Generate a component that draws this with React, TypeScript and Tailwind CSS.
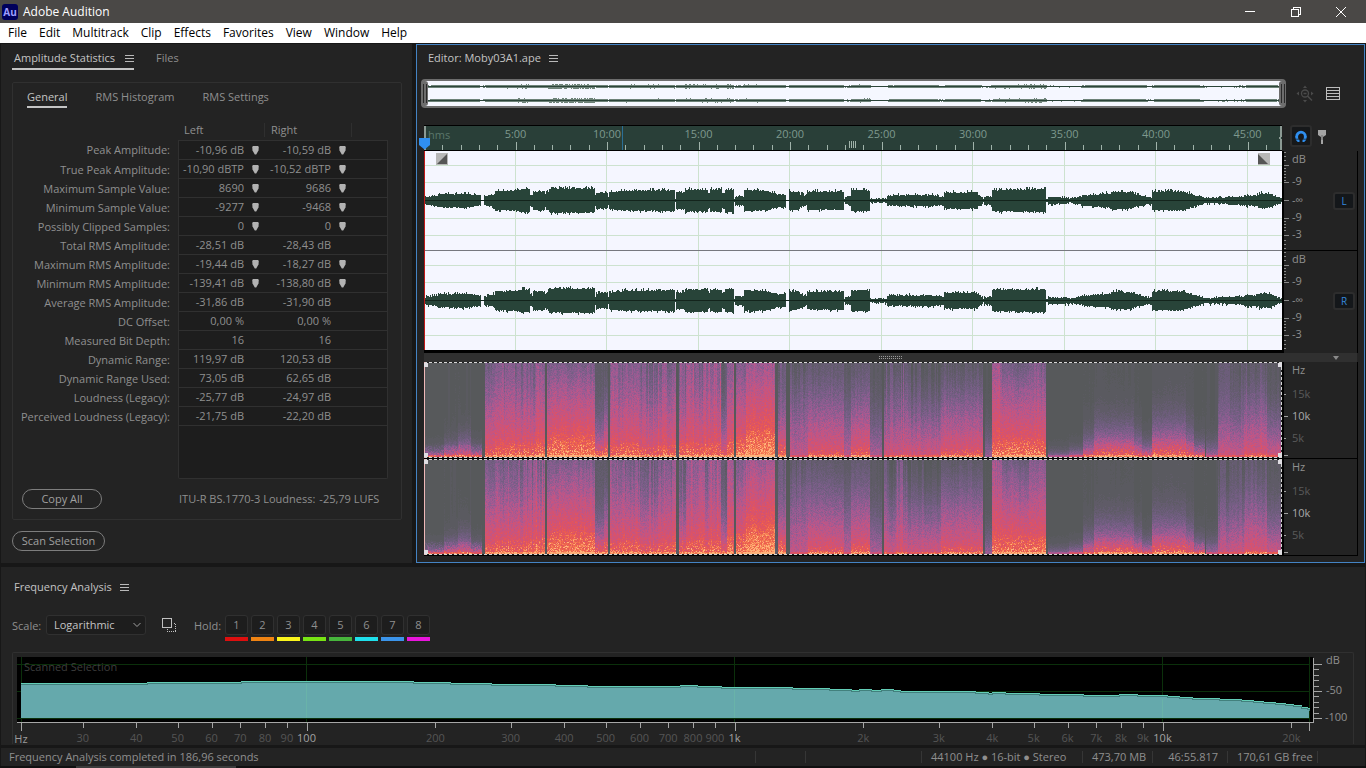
import { useMemo, useState } from "react";
import type { ReactNode } from "react";

type StatRow = { label: string; left: string; right: string; pin?: boolean };

const MENU = ["File", "Edit", "Multitrack", "Clip", "Effects", "Favorites", "View", "Window", "Help"];

const STATS: StatRow[] = [
  { label: "Peak Amplitude:", left: "-10,96 dB", right: "-10,59 dB", pin: true },
  { label: "True Peak Amplitude:", left: "-10,90 dBTP", right: "-10,52 dBTP", pin: true },
  { label: "Maximum Sample Value:", left: "8690", right: "9686", pin: true },
  { label: "Minimum Sample Value:", left: "-9277", right: "-9468", pin: true },
  { label: "Possibly Clipped Samples:", left: "0", right: "0", pin: true },
  { label: "Total RMS Amplitude:", left: "-28,51 dB", right: "-28,43 dB" },
  { label: "Maximum RMS Amplitude:", left: "-19,44 dB", right: "-18,27 dB", pin: true },
  { label: "Minimum RMS Amplitude:", left: "-139,41 dB", right: "-138,80 dB", pin: true },
  { label: "Average RMS Amplitude:", left: "-31,86 dB", right: "-31,90 dB" },
  { label: "DC Offset:", left: "0,00 %", right: "0,00 %" },
  { label: "Measured Bit Depth:", left: "16", right: "16" },
  { label: "Dynamic Range:", left: "119,97 dB", right: "120,53 dB" },
  { label: "Dynamic Range Used:", left: "73,05 dB", right: "62,65 dB" },
  { label: "Loudness (Legacy):", left: "-25,77 dB", right: "-24,97 dB" },
  { label: "Perceived Loudness (Legacy):", left: "-21,75 dB", right: "-22,20 dB" },
];

const HOLDS = [
  { n: 1, bar: "bg-[#dd0f0f]" },
  { n: 2, bar: "bg-[#ef8313]" },
  { n: 3, bar: "bg-[#fbf51c]" },
  { n: 4, bar: "bg-[#78e414]" },
  { n: 5, bar: "bg-[#47b53c]" },
  { n: 6, bar: "bg-[#1fe0ec]" },
  { n: 7, bar: "bg-[#3b94ea]" },
  { n: 8, bar: "bg-[#e815dc]" },
];

const TRACK_W = 858;
const MINUTES = 46.88;

// start, end, amplitude at start, amplitude at end
const ENVELOPE: number[][] = [
  [0, 14, 3, 5], [14, 46, 6, 6.5], [46, 57, 6, 4], [57, 60, 0, 0], [60, 71, 3.5, 6], [71, 79, 9, 9],
  [79, 97, 9, 10], [97, 106, 11, 11], [106, 109, 5, 5], [109, 121, 9, 9], [121, 125, 6, 10],
  [125, 171, 11.5, 11.5], [171, 172, 4, 4], [172, 184, 7, 7.5], [184, 185, 3, 3], [185, 205, 8, 10],
  [205, 251, 9.5, 10], [251, 252, 1, 1], [252, 261, 8, 8], [261, 284, 10.5, 10.5], [284, 286, 7, 7],
  [286, 298, 10.5, 10.5], [298, 301, 7, 8], [301, 310, 11, 11], [310, 311, 1, 1], [311, 320, 4, 4],
  [320, 343, 10, 9], [343, 353, 9, 6], [353, 362, 6, 6], [362, 365, 0, 0], [365, 376, 9, 8],
  [376, 383, 6, 4], [383, 420, 8.5, 8.5], [420, 421, 1, 1], [421, 427, 3, 4], [427, 446, 10, 10],
  [446, 463, 1.5, 1.5], [463, 508, 4.5, 5], [508, 520, 5, 3], [520, 553, 7.5, 7.5], [553, 559, 6, 2],
  [559, 560, 1, 1], [560, 568, 3, 4], [568, 595, 10, 10.5], [595, 622, 10.5, 11], [622, 624, 1, 1],
  [624, 645, 3, 2.5], [645, 658, 1.5, 4], [658, 687, 4.5, 6.5], [687, 710, 8.5, 7.5], [710, 722, 6, 3.5],
  [722, 728, 3, 3], [728, 760, 9, 9], [760, 780, 8, 2.5], [780, 820, 2, 3.5], [820, 835, 4.5, 5],
  [835, 848, 7, 6], [848, 858, 5, 1],
];

// start, end, top level, bottom level, falloff, stripe strength
const BANDS: number[][] = [
  [0, 20, 0, 0.78, 14, 0.02], [20, 34, 0.01, 0.78, 8, 0.05], [34, 47, 0.02, 0.78, 5.5, 0.06],
  [47, 58, 0, 0.78, 10, 0.03], [58, 61, 0, 0.03, 2, 0],
  [61, 71, 0.25, 0.76, 1.2, 0.06], [71, 95, 0.32, 0.8, 1.3, 0.16], [95, 112, 0.3, 0.8, 1.4, 0.16],
  [112, 121, 0.36, 0.82, 1.2, 0.18], [121, 123, 0, 0, 1, 0],
  [123, 128, 0.28, 0.84, 1.1, 0.06], [128, 171, 0.3, 0.87, 1, 0.06], [171, 180, 0.13, 0.8, 3, 0.04],
  [180, 184, 0.12, 0.82, 1.7, 0.05], [184, 186, 0, 0, 1, 0], [186, 196, 0.34, 0.78, 1.5, 0.14],
  [196, 215, 0.3, 0.8, 1.3, 0.1], [215, 234, 0.26, 0.76, 1.5, 0.14], [234, 252, 0.32, 0.78, 1.3, 0.14],
  [252, 255, 0.03, 0.05, 1, 0.03], [255, 262, 0.28, 0.8, 2, 0.22], [262, 273, 0.4, 0.8, 1.5, 0.16],
  [273, 284, 0.36, 0.8, 1.4, 0.2], [284, 297, 0.42, 0.8, 1.4, 0.14], [297, 303, 0.16, 0.76, 2.4, 0.1],
  [303, 310, 0.38, 0.83, 1.3, 0.16], [310, 312, 0, 0, 1, 0], [312, 322, 0.32, 0.85, 1.2, 0.06],
  [322, 351, 0.42, 0.92, 1, 0.06], [351, 354, 0.02, 0.1, 1, 0], [354, 362, 0.22, 0.84, 2.2, 0.1],
  [362, 366, 0, 0, 1, 0], [366, 384, 0.14, 0.58, 1.1, 0.12], [384, 420, 0.15, 0.73, 1.3, 0.05],
  [420, 427, 0.1, 0.55, 1.5, 0.04], [427, 446, 0.15, 0.76, 1.3, 0.05], [446, 458, 0.08, 0.52, 2.2, 0.04],
  [458, 460, 0, 0, 1, 0], [460, 472, 0.13, 0.65, 1.4, 0.18], [472, 484, 0.2, 0.68, 1.3, 0.18],
  [484, 500, 0.08, 0.65, 1.4, 0.12], [500, 517, 0.06, 0.67, 1.5, 0.12], [517, 559, 0.12, 0.74, 1.2, 0.07],
  [559, 561, 0, 0, 1, 0], [561, 568, 0.03, 0.45, 3.5, 0.03], [568, 578, 0.42, 0.82, 1.1, 0.08],
  [578, 593, 0.24, 0.84, 1, 0.06], [593, 605, 0.2, 0.84, 1, 0.06], [605, 622, 0.3, 0.83, 1.2, 0.1],
  [622, 624, 0, 0, 1, 0], [624, 645, 0, 0.5, 14, 0.01], [645, 659, 0, 0.68, 12, 0.01],
  [659, 670, 0.01, 0.74, 5, 0.03], [670, 710, 0.03, 0.82, 3.2, 0.02], [710, 718, 0.01, 0.78, 4.5, 0.02],
  [718, 728, 0, 0.75, 7, 0.02], [728, 762, 0.05, 0.83, 2.8, 0.02], [762, 770, 0.04, 0.8, 3.8, 0.02],
  [770, 781, 0.01, 0.78, 7, 0.02], [781, 782, 0, 0, 1, 0], [782, 794, 0.02, 0.58, 7, 0.04],
  [794, 820, 0.11, 0.62, 1.8, 0.11], [820, 843, 0.13, 0.7, 1.4, 0.12], [843, 858, 0.08, 0.66, 2.2, 0.06],
];

const RAMP = [
  "#57595b", "#5a5a60", "#5f5b67", "#655c70", "#6c5d7a", "#745e83", "#7f5e8b", "#8c5d90", "#9b5b92", "#aa5990",
  "#b8578a", "#c45582", "#ce5377", "#d8526b", "#e0545f", "#e85a53", "#ef684d", "#f57d55", "#fa9763", "#ffb37a",
];

function makeRandom(seed: number) {
  let s = seed;
  return () => {
    s = (s * 1664525 + 1013904223) % 4294967296;
    return s / 4294967296;
  };
}

function wavePath(mid: number, seed: number, scale = 1) {
  const rnd = makeRandom(seed);
  let d = "";
  for (const [from, to, a, b] of ENVELOPE) {
    for (let x = from; x < to; x++) {
      const amp = a + ((b - a) * (x - from)) / (to - from);
      const spike = rnd() > 0.8 ? 1.8 : 0;
      const up = amp < 1.2 ? amp : amp + rnd() * 1.4 - 0.8 + spike * Math.min(1, amp / 6);
      const down = amp < 1.2 ? amp : amp + rnd() * 1.4 - 0.4 + (rnd() > 0.85 ? 1.4 : 0);
      const top = Math.round(up * scale);
      const bottom = Math.round(down * scale);
      if (top + bottom > 0) d += `M${x} ${mid - top}h1v${top + bottom + 1}h-1z`;
    }
  }
  return d;
}

function spectrumPaths(seed: number) {
  const rnd = makeRandom(seed);
  const paths = RAMP.map(() => "");
  for (const [from, to, top, bottom, falloff, stripe] of BANDS) {
    let column = 0;
    for (let x = from; x < to; x++) {
      if (rnd() > 0.35) column = (rnd() - 0.5) * stripe * 1.6;
      let runStart = 0;
      let runLevel = -1;
      for (let y = 0; y <= 96; y++) {
        let level = -2;
        if (y < 96) {
          const h = 1 - y / 96;
          const body = top + (bottom - top) * Math.pow(1 - h, falloff);
          const floor = bottom > 0.45 && h < 0.04 ? 0.14 : 0;
          const reach = (bottom - 0.65) * 1.1;
          const spark = h < reach && rnd() > 0.7 ? 0.2 * (1 - (h / reach) * 0.6) : 0;
          const grain = (rnd() - 0.5) * Math.min(0.16, 0.01 + body * 0.35);
          const t = body + floor + spark + grain + column * (0.3 + h * 0.7);
          level = Math.max(0, Math.min(RAMP.length - 1, Math.round(t * (RAMP.length - 1))));
        }
        if (level !== runLevel) {
          if (runLevel >= 0) paths[runLevel] += `M${x} ${runStart}h1v${y - runStart}h-1z`;
          runStart = y;
          runLevel = level;
        }
      }
    }
  }
  return paths;
}

function BurgerIcon() {
  return (
    <svg width="9" height="9" viewBox="0 0 9 9" shapeRendering="crispEdges" aria-hidden="true">
      <path d="M0 1h9M0 4h9M0 7h9" transform="translate(0 .5)" stroke="#b9b9b9" />
    </svg>
  );
}

function PinIcon({ shown }: { shown?: boolean }) {
  return (
    <svg width="7" height="9" viewBox="0 0 7 9" aria-hidden="true">
      {shown && <path d="M1 0h5l.8 1-.3 3.500L4.200 8.500H2.800L.5 4.500.2 1z" fill="#b2b2b2" />}
    </svg>
  );
}

function TitleBar() {
  return (
    <header className="flex h-[23px] items-center justify-between bg-[#4a4846] pr-[2px] pl-[2px] text-white">
      <div className="flex items-center gap-[5px]">
        <span className="flex size-4 items-center justify-center rounded-[3px] bg-[#00005b] text-[10px] leading-4 font-bold text-[#9f9fff]">
          Au
        </span>
        <h1 className="text-xs leading-4">Adobe Audition</h1>
      </div>
      <div className="flex">
        <button type="button" aria-label="Minimize" className="flex h-[23px] w-[46px] items-center justify-center">
          <svg width="10" height="10" viewBox="0 0 10 10" shapeRendering="crispEdges">
            <path d="M0 4.500h10" stroke="#fff" />
          </svg>
        </button>
        <button type="button" aria-label="Restore" className="flex h-[23px] w-[45px] items-center justify-center">
          <svg width="10" height="10" viewBox="0 0 10 10" fill="none" stroke="#fff" shapeRendering="crispEdges">
            <path d="M.5 2.500h7v7h-7zM2.500 2.500v-2h7v7h-2" />
          </svg>
        </button>
        <button type="button" aria-label="Close" className="flex h-[23px] w-[46px] items-center justify-center">
          <svg width="10" height="10" viewBox="0 0 10 10" stroke="#fff">
            <path d="M0 0l10 10M10 0L0 10" />
          </svg>
        </button>
      </div>
    </header>
  );
}

function StatisticsPanel() {
  return (
    <section className="w-[411px] shrink-0 bg-[#232323] pl-[11px]">
      <div className="flex items-start gap-[22px]">
        <button
          type="button"
          className="flex items-center gap-[10px] border-b-2 border-[#c4c4c4] pt-[6px] pb-[2px] pl-[2px] leading-4 text-[#c4c4c4]"
        >
          Amplitude Statistics
          <BurgerIcon />
        </button>
        <button type="button" className="pt-[6px] leading-4">
          Files
        </button>
      </div>

      <div className="mt-3 mr-[10px] rounded-[2px] border border-[#303030] pb-[10px]">
        <div className="flex items-start gap-7 pl-[14px]">
          <button type="button" className="border-b-2 border-[#c4c4c4] pt-[6px] pb-[1px] leading-4 text-[#c4c4c4]">
            General
          </button>
          <button type="button" className="pt-[6px] leading-4">
            RMS Histogram
          </button>
          <button type="button" className="pt-[6px] leading-4">
            RMS Settings
          </button>
        </div>

        <table className="mt-[15px] w-[375px] table-fixed border-separate border-spacing-0">
          <colgroup>
            <col className="w-[165px]" />
            <col className="w-[87px]" />
            <col className="w-[87px]" />
            <col className="w-[36px]" />
          </colgroup>
          <thead>
            <tr className="h-[17px] text-left align-top">
              <td className="p-0" />
              <th scope="col" className="p-0 font-normal">
                <div className="h-[14px] border-r border-[#2f2f2f] pl-[6px] leading-[14px]">Left</div>
              </th>
              <th scope="col" className="p-0 font-normal">
                <div className="h-[14px] border-r border-[#2f2f2f] pl-[6px] leading-[14px]">Right</div>
              </th>
              <td className="p-0" />
            </tr>
          </thead>
          <tbody>
            {STATS.map((row, i) => {
              const line = i === 0 ? "border-y border-[#303030]" : "border-b border-[#303030]";
              return (
                <tr key={row.label} className={i === 0 ? "h-5" : "h-[19px]"}>
                  <th scope="row" className="p-0 pr-2 text-right leading-[18px] font-normal whitespace-nowrap">
                    {row.label}
                  </th>
                  <td className={`border-l bg-[#1d1d1d] p-0 pr-[6px] leading-[18px] ${line}`}>
                    <div className="flex items-center justify-end gap-2 whitespace-nowrap">
                      {row.left}
                      <PinIcon shown={row.pin} />
                    </div>
                  </td>
                  <td className={`bg-[#1d1d1d] p-0 pr-[6px] leading-[18px] ${line}`}>
                    <div className="flex items-center justify-end gap-2 whitespace-nowrap">
                      {row.right}
                      <PinIcon shown={row.pin} />
                    </div>
                  </td>
                  <td className={`border-r bg-[#1d1d1d] p-0 ${line}`} />
                </tr>
              );
            })}
            <tr className="h-[53px]">
              <td className="p-0" />
              <td colSpan={3} className="rounded-b-[2px] border-x border-b border-[#303030] bg-[#1d1d1d] p-0" />
            </tr>
          </tbody>
        </table>

        <div className="mt-[10px] flex items-center pl-[9px]">
          <button
            type="button"
            className="h-5 w-20 rounded-full border border-[#7d7d7d] leading-[18px] text-[#a0a0a0]"
          >
            Copy All
          </button>
          <p className="flex gap-1 pl-[77px] leading-4">
            <span>ITU-R BS.1770-3 Loudness:</span>
            <span>-25,79 LUFS</span>
          </p>
        </div>
      </div>

      <button
        type="button"
        className="mt-[11px] h-5 w-[93px] rounded-full border border-[#7d7d7d] leading-[18px] text-[#a0a0a0]"
      >
        Scan Selection
      </button>
    </section>
  );
}

function OverviewHandle() {
  return (
    <span className="flex h-[25px] w-[7px] justify-center gap-[2px] rounded-[3px] bg-[#6d6d6d] py-[3px]">
      <span className="w-px bg-[#2a2a2a]" />
      <span className="w-px bg-[#2a2a2a]" />
    </span>
  );
}

function Overview() {
  const path = useMemo(() => wavePath(7, 5, 0.13) + wavePath(21, 9, 0.13), []);
  return (
    <div className="flex items-center">
      <div className="relative -ml-[3px] flex h-[29px] min-w-0 flex-1 items-center rounded-[4px] border-2 border-[#6d6d6d] bg-[#f5f7ff]">
        <svg
          className="block h-[25px] w-full"
          viewBox="0 0 858 25"
          preserveAspectRatio="none"
          shapeRendering="crispEdges"
          aria-hidden="true"
        >
          <g transform="translate(0 -2)">
            <path d={path} fill="#6d8278" />
            <path d="M0 7.500h858M0 21.500h858" stroke="#2b4439" />
          </g>
        </svg>
        <span className="absolute -left-[2px]">
          <OverviewHandle />
        </span>
        <span className="absolute -right-[2px]">
          <OverviewHandle />
        </span>
      </div>
      <div className="flex w-[72px] items-center gap-3 pl-[10px]">
        <button type="button" aria-label="Zoom out full" className="size-[18px]">
          <svg width="18" height="18" viewBox="0 0 18 18" fill="none" stroke="#4a4a4a">
            <circle cx="9" cy="8.500" r="3.500" strokeWidth="1.300" />
            <path d="M7.500 8.500h3M11.500 11l4.500 4.500" strokeWidth="1.500" />
            <path
              d="M9 .5l2 2.500H7zM9 17.500l2-2.500H7zM.5 8.500L3 6.500v4zM17.500 8.500L15 6.500v4z"
              fill="#4a4a4a"
              stroke="none"
            />
          </svg>
        </button>
        <button type="button" aria-label="Display options" className="h-[14px] w-[14px]">
          <svg width="14" height="14" viewBox="0 0 14 14" fill="none" stroke="#bcbcbc" shapeRendering="crispEdges">
            <path d="M.5 .5h13v12h-13zM0 3.500h14M0 6.500h14M0 9.500h14" />
          </svg>
        </button>
      </div>
    </div>
  );
}

function Ruler() {
  const ticks = Array.from({ length: 46 }, (_, i) => i + 1);
  return (
    <div className="relative min-w-0 flex-1 border-y border-black bg-[#293f38]">
      <svg className="block h-6 w-full overflow-visible" fontSize="11" fill="#7e998e">
        <g shapeRendering="crispEdges">
          {ticks.map((m) => (
            <rect
              key={m}
              x={`${(m / MINUTES) * 100}%`}
              y={m % 5 === 0 ? 16 : 19}
              width="1"
              height={m % 5 === 0 ? 8 : 5}
              fill="#a0b3aa"
            />
          ))}
          <rect x="0" y="0" width="2" height="24" fill="#8c9a94" />
          <path d="M0 0h2v10l-1 2 1 2v10H0V14l-1-2 1-2z" transform="translate(856 0)" fill="#8c9a94" />
          <rect x="23.100%" y="0" width="1" height="24" fill="#2b6f96" />
          <path d="M0 0v7M2 0v7M4 0v7M6 0v7" transform="translate(425.500 15)" stroke="#a0b3aa" />
        </g>
        <text x="4" y="13" fill="#5b776b">
          hms
        </text>
        {ticks
          .filter((m) => m % 5 === 0)
          .map((m) => (
            <text key={m} x={`${(m / MINUTES) * 100}%`} y="12" textAnchor="middle">
              {m}:00
            </text>
          ))}
      </svg>
      <svg className="absolute top-3 -left-[5px]" width="11" height="12" viewBox="0 0 11 12" aria-hidden="true">
        <path d="M0 0h11v7l-5.500 4.500L0 7z" fill="#2f8ff0" />
      </svg>
    </div>
  );
}

function Waveforms() {
  const left = useMemo(() => wavePath(49, 11), []);
  const right = useMemo(() => wavePath(149, 42), []);
  const minutes = [5, 10, 15, 20, 25, 30, 35, 40, 45];
  return (
    <div className="relative min-w-0 flex-1 border-b-[3px] border-black bg-[#f5f6ff]">
      <svg
        className="block h-[199px] w-full"
        viewBox="0 0 858 199"
        preserveAspectRatio="none"
        shapeRendering="crispEdges"
        role="img"
        aria-label="Stereo waveform"
      >
        {minutes.map((m) => (
          <path key={m} d={`M${Math.round((m / MINUTES) * TRACK_W) - 0.5} 0v199`} stroke="#cde2cf" />
        ))}
        <path
          d="M0 14.500h858M0 31.500h858M0 67.500h858M0 84.500h858M0 114.500h858M0 131.500h858M0 167.500h858M0 184.500h858"
          stroke="#cde2cf"
        />
        <path d={left + right} fill="#284439" />
        <path d="M0 49.500h858M0 149.500h858" stroke="#13241c" />
        <path d="M0 99.500h858" stroke="#77787f" />
        <path d="M.5 0v199" stroke="#c01818" />
      </svg>
      <svg className="absolute top-[2px] left-3" width="12" height="12" viewBox="0 0 12 12" aria-hidden="true">
        <path d="M0 0h12v12H0z" fill="#b7b7b7" />
        <path d="M11 1v10H1z" fill="#555" />
      </svg>
      <svg className="absolute top-[2px] right-3" width="12" height="12" viewBox="0 0 12 12" aria-hidden="true">
        <path d="M0 0h12v12H0z" fill="#b7b7b7" />
        <path d="M0 1v10h10z" fill="#555" />
      </svg>
    </div>
  );
}

function DecibelScale({ channel }: { channel: string }) {
  const [on, setOn] = useState(true);
  return (
    <div className="flex h-[100px] items-center justify-between border-b border-black pr-[2px] last:h-[99px] last:border-b-0">
      <svg className="block h-[99px] w-[46px]" fontSize="11" fill="#8f8f8f">
        <path
          d="M0 1.500h2M0 5.500h2M0 9.500h2M0 14.500h5M0 17.500h2M0 20.500h2M0 23.500h2M0 26.500h2M0 29.500h2M0 31.500h5M0 49.500h5M0 67.500h5M0 70.500h2M0 73.500h2M0 76.500h2M0 79.500h2M0 84.500h5M0 89.500h2M0 93.500h2M0 97.500h2"
          stroke="#8a8a8a"
          shapeRendering="crispEdges"
        />
        <text x="8" y="12">dB</text>
        <text x="8" y="34">-9</text>
        <text x="8" y="53">-∞</text>
        <text x="8" y="70">-9</text>
        <text x="8" y="87">-3</text>
      </svg>
      <button
        type="button"
        aria-pressed={on}
        onClick={() => setOn(!on)}
        className="h-[18px] w-[22px] rounded-[3px] border-2 border-[#2d2d2d] bg-[#14171a] text-[10px] leading-[14px] text-[#3487dc]"
      >
        {channel}
      </button>
    </div>
  );
}

function Spectrogram({ seed }: { seed: number }) {
  const paths = useMemo(() => spectrumPaths(seed), [seed]);
  return (
    <svg
      className="block h-24 w-full"
      viewBox="0 0 858 96"
      preserveAspectRatio="none"
      shapeRendering="crispEdges"
      role="img"
      aria-label="Spectral frequency display"
    >
      <rect width="858" height="96" fill={RAMP[0]} />
      {paths.map((d, i) => (
        <path key={RAMP[i]} d={d} fill={RAMP[i]} />
      ))}
      <path d="M0 .5h858M0 95.500h858M857.500 0v96" stroke="#222" />
      <path d="M0 .5h858M0 95.500h858M857.500 0v96" stroke="#d6d6d6" strokeDasharray="3 2" />
      <path d="M.5 0v96" stroke="#efb8b8" />
      <path d="M0 1h4v4H0zM0 91h4v4H0zM854 1h4v4h-4zM854 91h4v4h-4z" fill="#dfdde2" />
    </svg>
  );
}

function HertzScale() {
  return (
    <svg className="block h-24 w-full" fontSize="11" fill="#a9a9a9">
      <path d="M0 32.500h2M0 54.500h4M0 76.500h2M0 93.500h4" stroke="#a0a0a0" shapeRendering="crispEdges" />
      <text x="8" y="12" fill="#8f8f8f">Hz</text>
      <text x="8" y="36" fill="#5a5a5a">15k</text>
      <text x="8" y="58">10k</text>
      <text x="8" y="80" fill="#5a5a5a">5k</text>
    </svg>
  );
}

function ScaleColumn({ children }: { children: ReactNode }) {
  return <div className="w-[76px] shrink-0 border-r border-l-2 border-black">{children}</div>;
}

function EditorPanel() {
  return (
    <section className="min-w-0 flex-1 border border-[#4483c4] bg-[#232323] pr-[6px] pb-[6px] pl-[7px]">
      <div className="flex h-[26px] items-center gap-2 pl-1 text-[#c4c4c4]">
        <h2>Editor: Moby03A1.ape</h2>
        <BurgerIcon />
      </div>
      <div className="mt-2">
        <Overview />
      </div>

      <div className="mt-[17px] flex">
        <Ruler />
        <div className="flex w-[76px] shrink-0 items-start gap-[6px] pl-2">
          <button
            type="button"
            aria-label="Toggle snapping"
            className="flex h-[22px] w-[22px] items-center justify-center rounded-[3px] border-2 border-[#2d2d2d] bg-[#16181a]"
          >
            <svg width="12" height="12" viewBox="0 0 12 12" fill="none" aria-hidden="true">
              <path
                d="M4.500 10.800H3.600A4.600 4.600 0 0 1 1.700 6.500a4.300 4.300 0 0 1 8.600 0 4.600 4.600 0 0 1-1.900 4.300H7.500"
                stroke="#2f8ff0"
                strokeWidth="2.800"
              />
              <path d="M0 9.200h5M7 9.200h5" stroke="#16181a" strokeWidth=".7" />
            </svg>
          </button>
          <button type="button" aria-label="Marker" className="pt-[5px]">
            <svg width="8" height="14" viewBox="0 0 8 14" aria-hidden="true">
              <path d="M0 0h8v5L5 7v7H3V7L0 5z" fill="#a4a4a4" />
              <path d="M4 5v5" stroke="#666" />
            </svg>
          </button>
        </div>
      </div>

      <div className="flex">
        <Waveforms />
        <ScaleColumn>
          <DecibelScale channel="L" />
          <DecibelScale channel="R" />
        </ScaleColumn>
      </div>

      <div className="mr-[1px] flex h-[9px] items-center bg-[#303030]">
        <div className="flex flex-1 justify-center pl-6">
          <svg width="24" height="4" viewBox="0 0 24 4" shapeRendering="crispEdges" aria-hidden="true">
            <path d="M0 .5h24M0 2.500h24" stroke="#9a9a9a" strokeDasharray="1 1" />
          </svg>
        </div>
        <svg className="mr-[18px]" width="6" height="4" viewBox="0 0 6 4" aria-hidden="true">
          <path d="M0 0h6L3 4z" fill="#8a8a8a" />
        </svg>
      </div>

      <div className="flex border-b border-black">
        <div className="flex min-w-0 flex-1 flex-col gap-px bg-black">
          <Spectrogram seed={77} />
          <Spectrogram seed={310} />
        </div>
        <ScaleColumn>
          <HertzScale />
          <div className="h-px bg-black" />
          <HertzScale />
        </ScaleColumn>
      </div>
    </section>
  );
}

const PLOT_W = 1296;
const freqX = (hz: number) => 289.5 + 428 * Math.log10(hz / 100);

const RESPONSE: number[][] = [
  [4, 26], [130, 25], [224, 24], [357, 24], [396, 25], [433, 26], [474, 27], [538, 28], [570, 29], [663, 28],
  [680, 29], [704, 30], [775, 31], [812, 32], [834, 33], [842, 32], [854, 33], [864, 32], [876, 33], [883, 34],
  [889, 34], [958, 35], [971, 36], [975, 35], [988, 36], [1022, 37], [1066, 38], [1102, 37], [1120, 38],
  [1150, 39], [1162, 40], [1175, 41], [1202, 42], [1224, 43], [1236, 44], [1246, 45], [1258, 46], [1268, 47],
  [1276, 48], [1284, 50], [1290, 51], [1292, 52],
];

function responseLine(offset: number) {
  return RESPONSE.map(([x, y], i) => (i === 0 ? `M${x} ${y + offset}` : `H${x}V${y + offset}`)).join("");
}

const MINOR_FREQS = [
  30, 40, 50, 60, 70, 80, 90, 200, 300, 400, 500, 600, 700, 800, 900, 2000, 3000, 4000, 5000, 6000, 7000, 8000, 9000,
  20000,
];
const MAJOR_FREQS = [100, 1000, 10000];
const freqLabel = (hz: number) => (hz >= 1000 ? `${hz / 1000}k` : `${hz}`);
const pct = (x: number) => `${(x / PLOT_W) * 100}%`;

function FrequencyPlot() {
  return (
    <div className="flex rounded-t-[2px] border border-b-0 border-[#303030] pt-1 pl-1">
      <div className="min-w-0 flex-1">
        <div className="relative">
          <svg
            className="block h-[65px] w-full bg-black"
            viewBox="0 0 1296 65"
            preserveAspectRatio="none"
            shapeRendering="crispEdges"
            role="img"
            aria-label="Frequency response"
          >
            <path d="M0 7.500h1293M0 34.500h1293" stroke="#0b300b" />
            <path d="M4.500 0v65M289.500 0v65M717.500 0v65M1145.500 0v65M1292.500 0v65" stroke="#0b300b" />
            <path d={`${responseLine(0)}V61H4z`} fill="#65a9ac" />
            <path d={responseLine(0.5)} fill="none" stroke="#63cdb6" />
            <path d={responseLine(1.5)} fill="none" stroke="#42807d" />
            <path d="M289.500 27v34M717.500 33v28M1145.500 42v19" stroke="#69b3a9" />
            <path d="M0 61.500h1293" stroke="#0b300b" />
          </svg>
          <span className="absolute top-[2px] left-[7px] leading-4 text-[#3d3d3d]">Scanned Selection</span>
        </div>
        <svg className="block h-[22px] w-full overflow-visible" fontSize="11" textAnchor="middle">
          <g shapeRendering="crispEdges" fill="#a6a6a6">
            <rect width="100%" height="1" />
            {MINOR_FREQS.map((hz) => (
              <rect key={hz} x={pct(freqX(hz))} y="0" width="1" height="6" />
            ))}
            {[4, ...MAJOR_FREQS.map(freqX), 1292].map((x) => (
              <rect key={x} x={pct(x)} y="0" width="1" height="9" />
            ))}
          </g>
          <text x={pct(4)} y="21" fill="#9b9b9b">
            Hz
          </text>
          {MINOR_FREQS.map((hz) => (
            <text key={hz} x={pct(freqX(hz))} y="20" fill="#555">
              {freqLabel(hz)}
            </text>
          ))}
          {MAJOR_FREQS.map((hz) => (
            <text key={hz} x={pct(freqX(hz))} y="20" fill="#a2a2a2">
              {freqLabel(hz)}
            </text>
          ))}
        </svg>
      </div>
      <svg className="block h-[87px] w-10 shrink-0 overflow-visible" fontSize="11" fill="#8f8f8f">
        <path
          d="M.5 1v65M0 7.500h9M0 12.500h6M0 18.500h6M0 23.500h6M0 29.500h6M0 34.500h9M0 39.500h6M0 45.500h6M0 50.500h6M0 56.500h6M0 61.500h9"
          fill="none"
          stroke="#a6a6a6"
          shapeRendering="crispEdges"
        />
        <text x="13" y="7">dB</text>
        <text x="13" y="37">-50</text>
        <text x="12" y="64">-100</text>
      </svg>
    </div>
  );
}

function FrequencyPanel() {
  return (
    <section className="flex-1 bg-[#232323] pr-[11px] pl-[11px]">
      <div className="flex items-center gap-2 pt-3 pl-[2px] leading-4 text-[#c4c4c4]">
        <h2>Frequency Analysis</h2>
        <BurgerIcon />
      </div>
      <div className="mt-5 flex h-[27px] items-start">
        <label htmlFor="scale" className="w-[34px] leading-[22px]">
          Scale:
        </label>
        <div className="relative">
          <select
            id="scale"
            defaultValue="log"
            className="block h-5 w-[100px] appearance-none rounded-[3px] border border-[#303030] bg-[#1d1d1d] pl-[7px] leading-[18px] text-[#c4c4c4]"
          >
            <option value="log">Logarithmic</option>
            <option value="lin">Linear</option>
          </select>
          <svg className="pointer-events-none absolute top-[7px] right-[5px]" width="8" height="6" viewBox="0 0 8 6" fill="none">
            <path d="M.5 1L4 4.500 7.500 1" stroke="#a0a0a0" />
          </svg>
        </div>
        <button type="button" aria-label="Copy all graph data" className="mt-[3px] ml-4 size-[14px]">
          <svg width="14" height="14" viewBox="0 0 14 14" fill="none" stroke="#c0c0c0" shapeRendering="crispEdges">
            <path d="M.5 .5h9v9h-9z" />
            <path d="M12 5.500h2M13.500 6v8M5 13.500h9M5.500 11v2" strokeDasharray="1 1" />
          </svg>
        </button>
        <span className="w-[49px] pl-[18px] leading-[22px]">Hold:</span>
        <div className="flex gap-[3px]">
          {HOLDS.map(({ n, bar }) => (
            <button key={n} type="button" aria-label={`Hold ${n}`} className="flex w-[23px] flex-col gap-[2px]">
              <span className="h-5 w-full rounded-[3px] border border-[#303030] bg-[#1d1d1d] leading-[18px]">{n}</span>
              <span className={`h-1 w-full ${bar}`} />
            </button>
          ))}
        </div>
      </div>
      <div className="mt-[10px]">
        <FrequencyPlot />
      </div>
    </section>
  );
}

function StatusBar() {
  return (
    <footer className="flex h-[18px] items-center justify-between bg-[#232323] pr-[47px] pl-2 leading-[18px]">
      <span>Frequency Analysis completed in 186,96 seconds</span>
      <div className="flex h-3 items-center leading-3 whitespace-nowrap">
        <span className="h-full w-[50px] border-l border-[#363636]" />
        <span className="h-full w-[116px] border-l border-[#363636]" />
        <span className="w-[161px] border-l border-[#363636] pl-[9px]">44100 Hz ● 16-bit ● Stereo</span>
        <span className="w-[70px] border-l border-[#363636] pl-[9px]">473,70 MB</span>
        <span className="w-[75px] border-l border-[#363636] pr-[9px] text-right">46:55.817</span>
        <span className="w-[91px] border-x border-[#363636] pl-[9px]">170,61 GB free</span>
      </div>
    </footer>
  );
}

export default function App() {
  return (
    <div className="flex min-h-screen min-w-[1100px] flex-col bg-[#171717] font-['Open_Sans','Noto_Sans',sans-serif] text-[11px] text-[#8f8f8f]">
      <TitleBar />
      <nav className="flex h-5 items-center gap-3 bg-white pl-2 text-xs leading-4 text-black">
        {MENU.map((item) => (
          <a key={item} href="#">
            {item}
          </a>
        ))}
      </nav>
      <main className="flex flex-1 flex-col gap-1 px-px pt-px">
        <div className="flex gap-1">
          <StatisticsPanel />
          <EditorPanel />
        </div>
        <FrequencyPanel />
      </main>
      <div className="mt-[3px] px-px">
        <StatusBar />
      </div>
      <div className="h-[2px] bg-[#101010] pl-[76px]">
        <div className="h-full w-40 bg-[#3c3c3c]" />
      </div>
    </div>
  );
}
